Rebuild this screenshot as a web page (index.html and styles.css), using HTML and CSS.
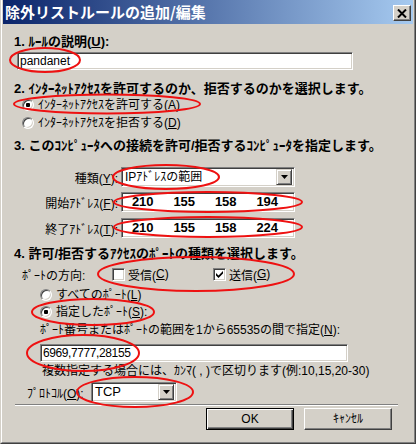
FILE: index.html
```html
<!DOCTYPE html>
<html lang="ja">
<head>
<meta charset="utf-8">
<link rel="stylesheet" href="styles.css">
</head>
<body>
<div class="window">
  <div class="frame">
    <div class="titlebar">
      <span class="title">除外リストルールの追加/編集</span>
      <span class="close"><svg width="10" height="9" viewBox="0 0 10 9"><path d="M1 0.5 L9 8.5 M9 0.5 L1 8.5" stroke="#000" stroke-width="2" fill="none"/></svg></span>
    </div>
    <div class="content">
      <div class="heading h-first">1. ﾙｰﾙの説明(<u>U</u>):</div>
      <div class="edit edit-desc">pandanet</div>
      <div class="heading h-access">2. ｲﾝﾀｰﾈｯﾄｱｸｾｽを許可するのか、拒否するのかを選択します。</div>
      <div class="optrow opt-allow"><span class="radio on"></span>ｲﾝﾀｰﾈｯﾄｱｸｾｽを許可する(<u>A</u>)</div>
      <div class="optrow opt-deny"><span class="radio"></span>ｲﾝﾀｰﾈｯﾄｱｸｾｽを拒否する(<u>D</u>)</div>
      <div class="heading h-comp">3. このｺﾝﾋﾟｭｰﾀへの接続を許可/拒否するｺﾝﾋﾟｭｰﾀを指定します。</div>
      <div class="fieldrow fr-type">
        <span class="flabel">種類(<u>Y</u>):</span>
        <div class="combo combo-type"><span>IPｱﾄﾞﾚｽの範囲</span><span class="ddbtn"><svg width="7" height="4" viewBox="0 0 7 4"><path d="M0 0H7L3.5 4Z" fill="#000"/></svg></span></div>
      </div>
      <div class="fieldrow fr-start">
        <span class="flabel">開始ｱﾄﾞﾚｽ(<u>F</u>):</span>
        <div class="edit ipfield"><span>210</span><span>155</span><span>158</span><span>194</span></div>
      </div>
      <div class="fieldrow fr-end">
        <span class="flabel">終了ｱﾄﾞﾚｽ(<u>T</u>):</span>
        <div class="edit ipfield"><span>210</span><span>155</span><span>158</span><span>224</span></div>
      </div>
      <div class="heading h-port">4. 許可/拒否するｱｸｾｽのﾎﾟｰﾄの種類を選択します。</div>
      <div class="dirrow">
        <span class="dirlabel">ﾎﾟｰﾄの方向:</span>
        <span class="chkitem"><span class="check"></span>受信(<u>C</u>)</span>
        <span class="chkitem"><span class="check"><svg width="7" height="7" viewBox="0 0 7 7"><path d="M0 2 L0 4.5 L2.5 7 L7 2.5 L7 0 L2.5 4.5 Z" fill="#000"/></svg></span>送信(<u>G</u>)</span>
      </div>
      <div class="optrow opt-all"><span class="radio"></span>すべてのﾎﾟｰﾄ(<u>L</u>)</div>
      <div class="optrow opt-spec"><span class="radio on"></span>指定したﾎﾟｰﾄ(<u>S</u>):</div>
      <div class="note note-range">ﾎﾟｰﾄ番号またはﾎﾟｰﾄの範囲を1から65535の間で指定(<u>N</u>):</div>
      <div class="edit edit-port">6969,7777,28155</div>
      <div class="note note-multi">複数指定する場合には、ｶﾝﾏ( , )で区切ります(例:10,15,20-30)</div>
      <div class="protorow">
        <span class="protolabel">ﾌﾟﾛﾄｺﾙ(<u>O</u>):</span>
        <div class="combo combo-proto"><span>TCP</span><span class="ddbtn"><svg width="7" height="4" viewBox="0 0 7 4"><path d="M0 0H7L3.5 4Z" fill="#000"/></svg></span></div>
      </div>
      <div class="separator"></div>
      <div class="buttons">
        <span class="btn default">OK</span>
        <span class="btn">ｷｬﾝｾﾙ</span>
      </div>
    </div>
  </div>
</div>
<svg class="marks" width="416" height="444" viewBox="0 0 416 444">
  <g fill="none" stroke="#ee1111" stroke-width="2">
    <ellipse cx="45" cy="60" rx="35" ry="12"/>
    <ellipse cx="107" cy="104" rx="93" ry="9.5"/>
    <ellipse cx="166" cy="177" rx="53" ry="12"/>
    <ellipse cx="208" cy="202" rx="94" ry="10"/>
    <ellipse cx="208" cy="227" rx="94" ry="10"/>
    <ellipse cx="196" cy="274" rx="98" ry="17"/>
    <ellipse cx="93" cy="312" rx="61" ry="13"/>
    <ellipse cx="83" cy="353" rx="56" ry="18"/>
    <ellipse cx="135" cy="392" rx="58" ry="15"/>
  </g>
</svg>
</body>
</html>
```

FILE: styles.css
```css
html, body {
  margin: 0;
  padding: 0;
}
body {
  position: relative;
  width: 416px;
  height: 444px;
  background: #d4d0c8;
  font-family: "Liberation Sans", "Noto Sans CJK JP", sans-serif;
  font-size: 12px;
  color: #000;
}
u {
  text-decoration: underline;
  text-underline-offset: 1px;
}
.window {
  width: 416px;
  height: 444px;
  box-sizing: border-box;
  border-left: 1px solid #d4d0c8;
  border-right: 1px solid #404040;
  border-bottom: 1px solid #404040;
  overflow: hidden;
}
.frame {
  height: 100%;
  box-sizing: border-box;
  border-left: 1px solid #ffffff;
  border-right: 1px solid #808080;
  border-bottom: 1px solid #808080;
}
.titlebar {
  margin: 0 1px;
  height: 24px;
  display: flex;
  justify-content: space-between;
  align-items: flex-start;
  background: linear-gradient(to right, #0a246a, #a6caf0);
}
.title {
  color: #fff;
  font-family: "Noto Sans CJK JP", sans-serif;
  font-weight: bold;
  font-size: 15px;
  line-height: 24px;
  padding-left: 2px;
}
.close {
  width: 18px;
  height: 16px;
  margin: 5px 2px 0 0;
  box-sizing: border-box;
  background: #d4d0c8;
  border: 1px solid;
  border-color: #fff #404040 #404040 #fff;
  box-shadow: inset -1px -1px #808080;
  display: flex;
  align-items: center;
  justify-content: center;
}
.content {
  display: flex;
  flex-direction: column;
  align-items: flex-start;
}
.heading {
  font-weight: bold;
  font-size: 13px;
  line-height: 16px;
  height: 16px;
  margin-left: 12px;
  white-space: nowrap;
}
.h-first { margin-top: 9px; height: 17px; line-height: 17px; }
.h-access { margin-top: 11px; }
.h-comp { margin-top: 7px; }
.h-port { margin-top: 8px; }

.edit {
  box-sizing: border-box;
  height: 18px;
  background: #fff;
  border: 1px solid;
  border-color: #808080 #fff #fff #808080;
  box-shadow: inset 1px 1px #404040, inset -1px -1px #d4d0c8;
  line-height: 16px;
  padding-left: 2px;
  white-space: nowrap;
}
.edit-desc { margin: 2px 0 0 15px; width: 336px; }
.edit-port { margin: 6px 0 0 38px; width: 308px; letter-spacing: -0.4px; }

.optrow {
  display: flex;
  align-items: center;
  height: 16px;
  line-height: 16px;
  white-space: nowrap;
}
.opt-allow { margin: 0 0 0 20px; }
.opt-deny { margin: 2px 0 0 20px; }
.opt-all { margin: 5px 0 0 38px; }
.opt-spec { margin: 1px 0 0 38px; }

.radio {
  position: relative;
  width: 12px;
  height: 12px;
  box-sizing: border-box;
  border-radius: 50%;
  background: #fff;
  border: 1px solid;
  border-color: #808080 #fff #fff #808080;
  box-shadow: inset 1px 1px #404040, inset -1px -1px #d4d0c8;
  margin-right: 4px;
  flex: none;
}
.radio.on::after {
  content: "";
  position: absolute;
  left: 3px;
  top: 3px;
  width: 4px;
  height: 4px;
  border-radius: 1px;
  background: #000;
}

.fieldrow {
  display: flex;
  align-items: center;
  height: 20px;
}
.fr-type { margin-top: 13px; }
.fr-start { margin-top: 5px; }
.fr-end { margin-top: 6px; }
.flabel {
  width: 116px;
  text-align: right;
  white-space: nowrap;
  margin-right: 3px;
}
.combo {
  box-sizing: border-box;
  height: 20px;
  background: #fff;
  border: 1px solid;
  border-color: #808080 #fff #fff #808080;
  box-shadow: inset 1px 1px #404040, inset -1px -1px #d4d0c8;
  display: flex;
  justify-content: space-between;
  align-items: center;
  padding: 0 2px 0 3px;
  line-height: 16px;
}
.combo-type { width: 174px; }
.combo-proto { width: 86px; font-size: 13px; }
.ddbtn {
  width: 16px;
  height: 16px;
  box-sizing: border-box;
  background: #d4d0c8;
  border: 1px solid;
  border-color: #d4d0c8 #404040 #404040 #d4d0c8;
  box-shadow: inset 1px 1px #fff, inset -1px -1px #808080;
  display: flex;
  align-items: center;
  justify-content: center;
}
.ipfield {
  width: 174px;
  height: 20px;
  padding: 0;
  display: grid;
  grid-template-columns: repeat(4, 41.5px);
  font-weight: bold;
  font-size: 13px;
  line-height: 18px;
  text-align: center;
}

.dirrow {
  display: flex;
  align-items: center;
  height: 16px;
  margin: 4px 0 0 20px;
  white-space: nowrap;
}
.dirlabel { width: 90px; }
.chkitem {
  width: 101px;
  display: flex;
  align-items: center;
}
.check {
  width: 13px;
  height: 13px;
  box-sizing: border-box;
  background: #fff;
  border: 1px solid;
  border-color: #808080 #fff #fff #808080;
  box-shadow: inset 1px 1px #404040, inset -1px -1px #d4d0c8;
  margin: 1px 3px 0 0;
  display: flex;
  align-items: center;
  justify-content: center;
  flex: none;
}

.note {
  height: 16px;
  line-height: 16px;
  white-space: nowrap;
}
.note-range { margin: 2px 0 0 38px; }
.note-multi { margin: 1px 0 0 40px; }

.protorow {
  display: flex;
  align-items: center;
  height: 20px;
  margin: 3px 0 0 25px;
}
.protolabel { width: 64px; white-space: nowrap; }

.separator {
  margin: 2px 0 0 13px;
  width: 383px;
  border-top: 1px solid #808080;
  border-bottom: 1px solid #fff;
}
.buttons {
  display: flex;
  gap: 10px;
  margin: 2px 0 0 204px;
}
.btn {
  width: 88px;
  height: 22px;
  box-sizing: border-box;
  background: #d4d0c8;
  border: 1px solid;
  border-color: #fff #404040 #404040 #fff;
  box-shadow: inset -1px -1px #808080;
  display: flex;
  align-items: center;
  justify-content: center;
  line-height: 16px;
}
.btn.default {
  border-color: #000;
  box-shadow: inset 1px 1px #fff, inset -1px -1px #404040, inset -2px -2px #808080;
}
.marks {
  position: absolute;
  left: 0;
  top: 0;
  pointer-events: none;
}
```
